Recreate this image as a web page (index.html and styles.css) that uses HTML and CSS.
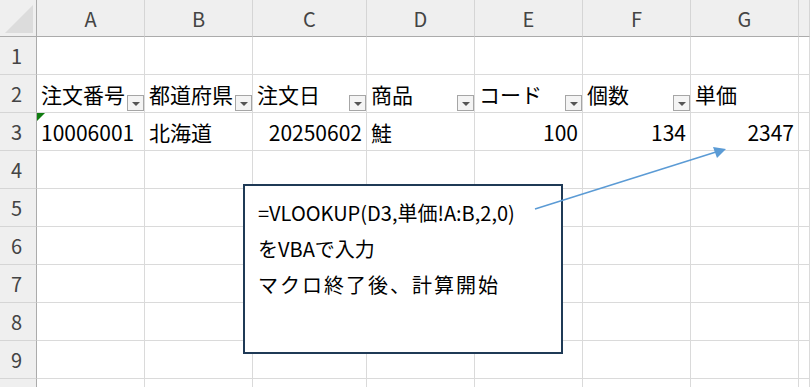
FILE: index.html
```html
<!DOCTYPE html>
<html lang="ja">
<head>
  <meta charset="UTF-8">
  <title>注文データ</title>
  <link rel="stylesheet" href="styles.css">
</head>
<body>
  <div class="sheet">
    <!-- column headers -->
    <div class="corner"><span class="corner-mark"></span></div>
    <div class="col-head">A</div>
    <div class="col-head">B</div>
    <div class="col-head">C</div>
    <div class="col-head">D</div>
    <div class="col-head">E</div>
    <div class="col-head">F</div>
    <div class="col-head">G</div>
    <div class="col-head"></div>

    <!-- row 1 -->
    <div class="row-head">1</div>
    <div class="cell"></div><div class="cell"></div><div class="cell"></div><div class="cell"></div>
    <div class="cell"></div><div class="cell"></div><div class="cell"></div><div class="cell"></div>

    <!-- row 2: table header with filters -->
    <div class="row-head">2</div>
    <div class="cell filter"><span>注文番号</span><span class="drop"></span></div>
    <div class="cell filter"><span>都道府県</span><span class="drop"></span></div>
    <div class="cell filter"><span>注文日</span><span class="drop"></span></div>
    <div class="cell filter"><span>商品</span><span class="drop"></span></div>
    <div class="cell filter"><span>コード</span><span class="drop"></span></div>
    <div class="cell filter"><span>個数</span><span class="drop"></span></div>
    <div class="cell">単価</div>
    <div class="cell"></div>

    <!-- row 3 -->
    <div class="row-head">3</div>
    <div class="cell flagged">10006001</div>
    <div class="cell">北海道</div>
    <div class="cell num">20250602</div>
    <div class="cell">鮭</div>
    <div class="cell num">100</div>
    <div class="cell num">134</div>
    <div class="cell num">2347</div>
    <div class="cell"></div>

    <div class="row-head">4</div>
    <div class="cell"></div><div class="cell"></div><div class="cell"></div><div class="cell"></div>
    <div class="cell"></div><div class="cell"></div><div class="cell"></div><div class="cell"></div>

    <div class="row-head">5</div>
    <div class="cell"></div><div class="cell"></div><div class="cell"></div><div class="cell"></div>
    <div class="cell"></div><div class="cell"></div><div class="cell"></div><div class="cell"></div>

    <div class="row-head">6</div>
    <div class="cell"></div><div class="cell"></div><div class="cell"></div><div class="cell"></div>
    <div class="cell"></div><div class="cell"></div><div class="cell"></div><div class="cell"></div>

    <div class="row-head">7</div>
    <div class="cell"></div><div class="cell"></div><div class="cell"></div><div class="cell"></div>
    <div class="cell"></div><div class="cell"></div><div class="cell"></div><div class="cell"></div>

    <div class="row-head">8</div>
    <div class="cell"></div><div class="cell"></div><div class="cell"></div><div class="cell"></div>
    <div class="cell"></div><div class="cell"></div><div class="cell"></div><div class="cell"></div>

    <div class="row-head">9</div>
    <div class="cell"></div><div class="cell"></div><div class="cell"></div><div class="cell"></div>
    <div class="cell"></div><div class="cell"></div><div class="cell"></div><div class="cell"></div>

    <!-- row 10, only its top edge is in view -->
    <div class="row-head"></div>
    <div class="cell"></div><div class="cell"></div><div class="cell"></div><div class="cell"></div>
    <div class="cell"></div><div class="cell"></div><div class="cell"></div><div class="cell"></div>
  </div>

  <!-- floating text box -->
  <div class="note">
    <p class="formula">=VLOOKUP(D3,単価!A:B,2,0)</p>
    <p>をVBAで入力</p>
    <p class="spaced">マクロ終了後、計算開始</p>
  </div>

  <svg class="connector" width="810" height="387" viewBox="0 0 810 387">
    <line x1="535" y1="209" x2="716" y2="152" stroke="#5b9bd5" stroke-width="1.5"/>
    <polygon points="726,149 713,147 717,158" fill="#5b9bd5"/>
  </svg>
</body>
</html>
```

FILE: styles.css
```css
* {
  margin: 0;
  padding: 0;
  box-sizing: border-box;
}

body {
  width: 810px;
  height: 387px;
  overflow: hidden;
  background: #fff;
  font-family: "Noto Sans CJK JP", "Noto Sans", sans-serif;
  color: #000;
  position: relative;
}

/* Worksheet grid */
.sheet {
  display: grid;
  grid-template-columns: 37px 108px 108px 114px 108px 108px 108px 108px 1fr;
  grid-template-rows: 37px;
  grid-auto-rows: 38px;
}

.corner {
  background: #efefef;
  border-right: 1px solid #ababab;
  border-bottom: 1px solid #ababab;
  position: relative;
}

.corner-mark {
  position: absolute;
  right: 3px;
  bottom: 3px;
  width: 0;
  height: 0;
  border-left: 28px solid transparent;
  border-bottom: 28px solid #dcdcdc;
}

.col-head {
  background: #efefef;
  border-right: 1px solid #d5d5d5;
  border-bottom: 1px solid #ababab;
  color: #444;
  font-size: 20px;
  display: flex;
  align-items: center;
  justify-content: center;
}

.row-head {
  background: #efefef;
  border-right: 1px solid #ababab;
  border-bottom: 1px solid #d5d5d5;
  color: #444;
  font-size: 20px;
  display: flex;
  align-items: center;
  justify-content: center;
  padding-right: 3px;
}

.cell {
  border-right: 1px solid #dadada;
  border-bottom: 1px solid #dadada;
  font-size: 21px;
  padding: 0 4px;
  display: flex;
  align-items: center;
  white-space: nowrap;
  position: relative;
}

.cell.num {
  justify-content: flex-end;
}

/* Header cells carrying an autofilter button */
.cell.filter {
  justify-content: space-between;
  padding-right: 0;
}

.drop {
  align-self: flex-end;
  margin-bottom: 1px;
  width: 17px;
  height: 16px;
  flex: none;
  border: 1px solid #a6a6a6;
  background: #f4f4f4;
  display: flex;
  align-items: center;
  justify-content: center;
}

.drop::after {
  content: "";
  width: 0;
  height: 0;
  margin-top: 2px;
  border-left: 4px solid transparent;
  border-right: 4px solid transparent;
  border-top: 4px solid #555;
}

/* Green error indicator (number stored as text) */
.cell.flagged::before {
  content: "";
  position: absolute;
  top: 0;
  left: 0;
  border-top: 8px solid #107c10;
  border-right: 8px solid transparent;
}

/* Text box shape */
.note {
  position: absolute;
  left: 243px;
  top: 184px;
  width: 320px;
  height: 170px;
  border: 2px solid #1f3a56;
  background: #fff;
  padding: 9px 13px;
  font-size: 20px;
  line-height: 36px;
}

.note .spaced {
  letter-spacing: 2px;
}

.connector {
  position: absolute;
  left: 0;
  top: 0;
  pointer-events: none;
}
```
